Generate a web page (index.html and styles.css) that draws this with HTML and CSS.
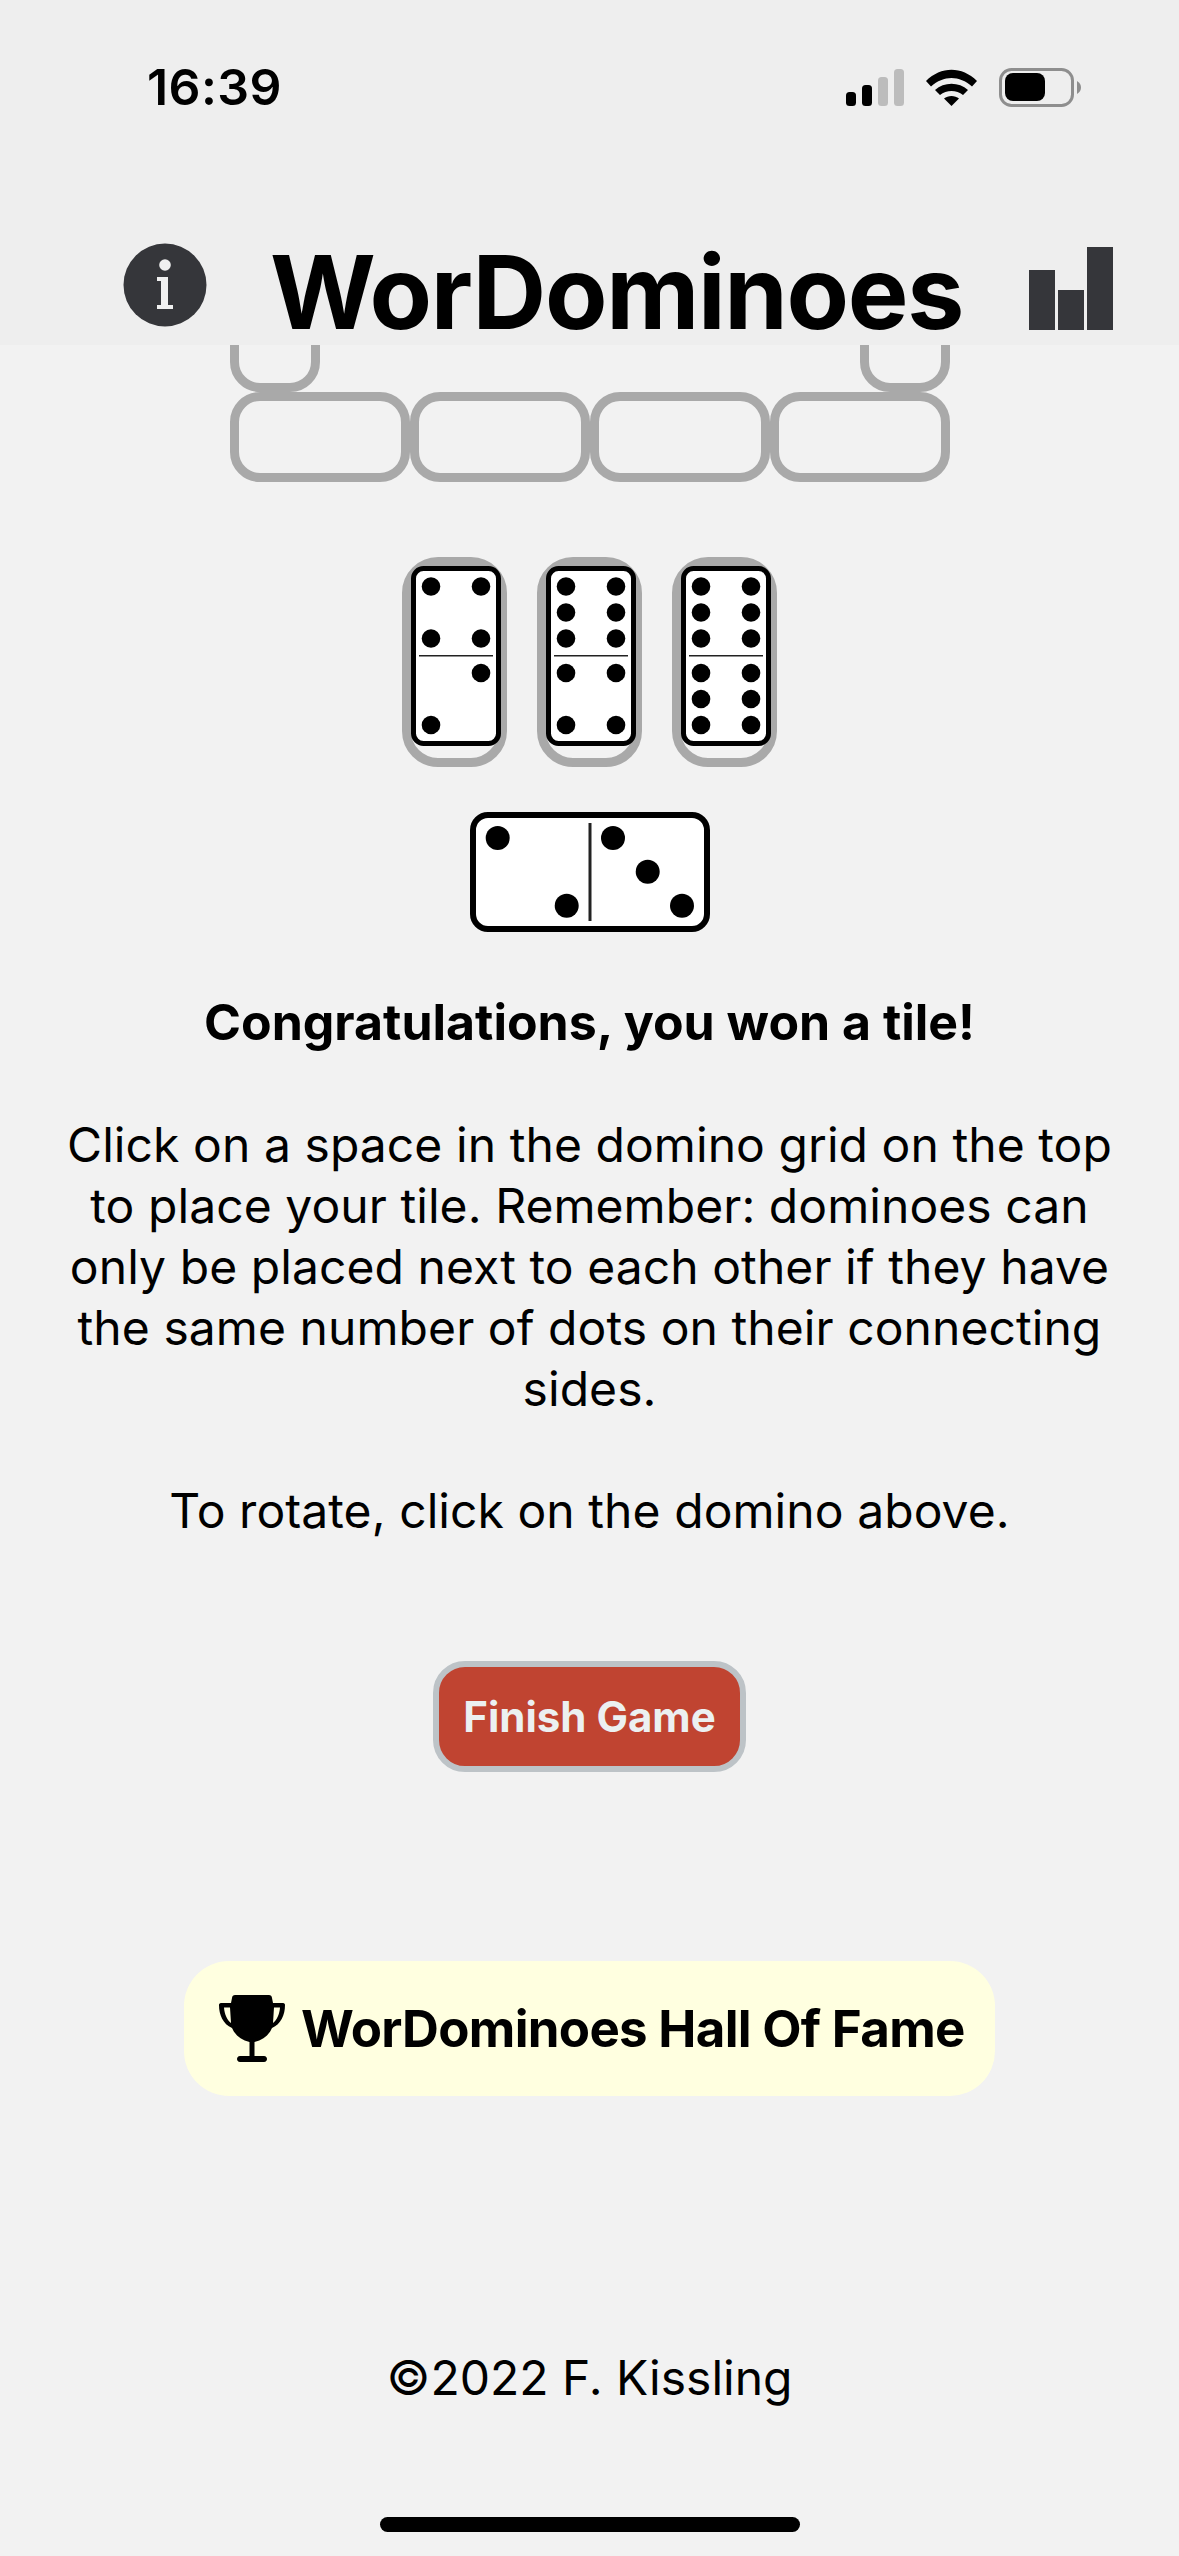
FILE: index.html
```html
<!DOCTYPE html>
<html lang="en">
<head>
<meta charset="utf-8">
<title>WorDominoes</title>
<link rel="stylesheet" href="styles.css">
</head>
<body>
<header class="topbar">
  <div class="status">
    <span class="clock">16:39</span>
    <div class="status-icons">
      <svg class="signal" width="58" height="38" viewBox="0 0 58 38">
        <rect x="0" y="23" width="10" height="14" rx="3.5" fill="#000"/>
        <rect x="16" y="16" width="10" height="21" rx="3.5" fill="#000"/>
        <rect x="32" y="8" width="10" height="29" rx="3.5" fill="#bcbcbc"/>
        <rect x="48" y="0" width="10" height="37" rx="3.5" fill="#bcbcbc"/>
      </svg>
      <svg class="wifi" width="51" height="38" viewBox="0 0 51 38">
        <path d="M0 12 C15 -3 36 -3 51 12 L46 17.500 C33.500 6 17.500 6 5 17.500Z" fill="#000"/>
        <path d="M9 21 C18 12.500 33 12.500 42 21 L37 26 C30.500 20.500 20.500 20.500 14 26Z" fill="#000"/>
        <path d="M18 29.500 C22 26 29 26 33 29.500 L25.500 37Z" fill="#000"/>
      </svg>
      <svg class="battery" width="82" height="39" viewBox="0 0 82 39">
        <rect x="1.500" y="1.500" width="72" height="36" rx="11" fill="none" stroke="#8e8e8e" stroke-width="3"/>
        <rect x="6" y="5" width="40" height="28" rx="8" fill="#000"/>
        <path d="M78 13 C81 15 82 17 82 19.500 C82 22 81 24 78 26Z" fill="#8e8e8e"/>
      </svg>
    </div>
  </div>
  <div class="titlebar">
    <svg class="info" width="84" height="84" viewBox="0 0 84 84">
      <circle cx="42" cy="42" r="41.500" fill="#35363a"/>
      <circle cx="42" cy="22" r="5.800" fill="#f0f0f0"/>
      <path d="M34 34 H45 V62 H50 V66 H34 V62 H38 V38 H34Z" fill="#f0f0f0"/>
    </svg>
    <h1 class="title">WorDominoes</h1>
    <div class="stats" aria-label="Statistics">
      <span class="stat-bar stat-mid"></span>
      <span class="stat-bar stat-low"></span>
      <span class="stat-bar stat-high"></span>
    </div>
  </div>
</header>

<main class="game">
  <section class="board">
    <div class="board-row">
      <div class="slot slot-v"></div>
      <div class="slot slot-v"></div>
    </div>
    <div class="board-row">
      <div class="slot slot-h"></div>
      <div class="slot slot-h"></div>
      <div class="slot slot-h"></div>
      <div class="slot slot-h"></div>
    </div>
  </section>

  <section class="tray">
    <div class="tray-cell">
      <svg class="domino-v" width="90" height="180" viewBox="0 0 90 180">
        <use href="#tile-v"/>
        <g class="pips"><circle cx="20" cy="20.500" r="9.300"/><circle cx="70" cy="20.500" r="9.300"/><circle cx="20" cy="72.500" r="9.300"/><circle cx="70" cy="72.500" r="9.300"/><circle cx="70" cy="107" r="9.300"/><circle cx="20" cy="159" r="9.300"/></g>
      </svg>
    </div>
    <div class="tray-cell">
      <svg class="domino-v" width="90" height="180" viewBox="0 0 90 180">
        <use href="#tile-v"/>
        <g class="pips"><circle cx="20" cy="20.500" r="9.300"/><circle cx="70" cy="20.500" r="9.300"/><circle cx="20" cy="46.500" r="9.300"/><circle cx="70" cy="46.500" r="9.300"/><circle cx="20" cy="72.500" r="9.300"/><circle cx="70" cy="72.500" r="9.300"/><circle cx="20" cy="107" r="9.300"/><circle cx="70" cy="107" r="9.300"/><circle cx="20" cy="159" r="9.300"/><circle cx="70" cy="159" r="9.300"/></g>
      </svg>
    </div>
    <div class="tray-cell">
      <svg class="domino-v" width="90" height="180" viewBox="0 0 90 180">
        <use href="#tile-v"/>
        <g class="pips"><circle cx="20" cy="20.500" r="9.300"/><circle cx="70" cy="20.500" r="9.300"/><circle cx="20" cy="46.500" r="9.300"/><circle cx="70" cy="46.500" r="9.300"/><circle cx="20" cy="72.500" r="9.300"/><circle cx="70" cy="72.500" r="9.300"/><circle cx="20" cy="107" r="9.300"/><circle cx="70" cy="107" r="9.300"/><circle cx="20" cy="133" r="9.300"/><circle cx="70" cy="133" r="9.300"/><circle cx="20" cy="159" r="9.300"/><circle cx="70" cy="159" r="9.300"/></g>
      </svg>
    </div>
  </section>

  <svg class="domino-h" width="240" height="120" viewBox="0 0 240 120">
    <rect x="3" y="3" width="234" height="114" rx="15" fill="#fff" stroke="#000" stroke-width="6"/>
    <rect x="118.500" y="11" width="3" height="98" fill="#222"/>
    <g class="pips"><circle cx="27.700" cy="26" r="12"/><circle cx="96.700" cy="93.700" r="12"/><circle cx="143" cy="26" r="12"/><circle cx="177.700" cy="59.700" r="12"/><circle cx="212" cy="93.700" r="12"/></g>
  </svg>

  <section class="message">
    <p class="won">Congratulations, you won a tile!</p>
    <p>Click on a space in the domino grid on the top to place your tile. Remember: dominoes can only be placed next to each other if they have the same number of dots on their connecting sides.</p>
    <p>To rotate, click on the domino above.</p>
  </section>

  <button class="finish" type="button">Finish Game</button>

  <a class="fame">
    <svg class="trophy" width="66" height="68" viewBox="0 0 66 68">
      <path d="M13 3 C13 1 14.500 0 16 0 H50 C51.500 0 53 1 53 3 L54 8 H64 C65.500 8 66 9 66 10 C66 20 62 29 53 33 C50 40 44 45 35.500 47 V61 H45 C47 61 48 62.500 48 64 C48 65.500 47 67 45 67 H21 C19 67 18 65.500 18 64 C18 62.500 19 61 21 61 H30.500 V47 C22 45 16 40 13 33 C4 29 0 20 0 10 C0 9 .5 8 2 8 H12Z M5 12.500 C5.500 19 8 25 12 28 L11 12.500Z M61 12.500 H55 L54 28 C58 25 60.500 19 61 12.500Z" fill="#000" fill-rule="evenodd"/>
    </svg>
    <span>WorDominoes Hall Of Fame</span>
  </a>

  <footer class="credit">©2022 F. Kissling</footer>
</main>

<div class="home-bar"></div>

<svg class="defs" width="0" height="0">
  <defs>
    <g id="tile-v">
      <rect x="2.500" y="2.500" width="85" height="175" rx="10" fill="#fff" stroke="#000" stroke-width="5"/>
      <rect x="8" y="89" width="74" height="1.500" fill="#222"/>
    </g>
  </defs>
</svg>
</body>
</html>
```
FILE: styles.css
```css
* {
  box-sizing: border-box;
}

html,
body {
  margin: 0;
  padding: 0;
}

body {
  position: relative;
  height: 2556px;
  overflow: hidden;
  background: #f2f2f2;
  color: #000;
  font-family: Inter, "Liberation Sans", sans-serif;
}

/* Status bar and title sit on one pale strip above the scrolled board */
.topbar {
  position: absolute;
  top: 0;
  left: 0;
  z-index: 2;
  width: 100%;
  height: 345px;
  padding-top: 68px;
  background: #eeeeee;
}

.status {
  display: flex;
  align-items: center;
  justify-content: space-between;
  height: 38px;
  padding: 0 98px 0 147px;
}

.clock {
  font-size: 50px;
  font-weight: 600;
  line-height: 38px;
  letter-spacing: 0.4px;
}

.status-icons {
  display: flex;
  align-items: flex-start;
  gap: 22px;
}

.signal,
.wifi {
  margin-top: 1px;
}

.titlebar {
  display: flex;
  align-items: flex-start;
  justify-content: space-between;
  margin-top: 137px;
  padding: 0 66px 0 123px;
}

.info {
  display: block;
}

.title {
  margin: -13px 0 0 -3px;
  font-size: 102px;
  font-weight: 700;
  line-height: 124px;
  letter-spacing: -1.3px;
}

.stats {
  display: flex;
  align-items: flex-end;
  gap: 3px;
  height: 83px;
  margin-top: 4px;
}

.stat-bar {
  display: block;
  width: 26px;
  background: #35363a;
}

.stat-mid {
  height: 60px;
}

.stat-low {
  height: 40px;
}

.stat-high {
  height: 83px;
}

.game {
  display: flex;
  flex-direction: column;
  align-items: center;
  padding-top: 212px;
}

.board {
  display: flex;
  flex-direction: column;
  width: 720px;
}

.board-row {
  display: flex;
  justify-content: space-between;
}

.slot {
  border: 9px solid #a9a9a9;
  border-radius: 30px;
}

.slot-v {
  width: 90px;
  height: 180px;
}

.slot-h {
  width: 180px;
  height: 90px;
}

.tray {
  display: flex;
  gap: 30px;
  margin-top: 75px;
}

.tray-cell {
  width: 105px;
  height: 210px;
  border: 9px solid #a9a9a9;
  border-radius: 36px;
}

.domino-v,
.domino-h {
  display: block;
}

.pips {
  fill: #000;
}

.domino-h {
  margin-top: 45px;
}

.message {
  width: 1060px;
  margin-top: 60px;
  font-size: 48px;
  font-weight: 380;
  line-height: 61px;
  letter-spacing: 0.07px;
  text-align: center;
}

.message p {
  margin: 0 0 61px;
}

.message .won {
  font-size: 50px;
  font-weight: 700;
  letter-spacing: 0;
}

.finish {
  width: 313px;
  height: 111px;
  margin-top: 59px;
  padding: 0;
  border: 6px solid #bdc3c7;
  border-radius: 32px;
  background: #c04431;
  color: #ecf0f1;
  font-family: inherit;
  font-size: 42px;
  font-weight: 700;
}

.fame {
  display: flex;
  align-items: center;
  gap: 16px;
  width: 811px;
  height: 135px;
  margin-top: 189px;
  padding-left: 35px;
  border-radius: 45px;
  background: #ffffe0;
  font-size: 51px;
  font-weight: 700;
  letter-spacing: -0.7px;
}

.trophy {
  display: block;
  flex: none;
}

.credit {
  margin-top: 251px;
  font-size: 48px;
  font-weight: 380;
  line-height: 61px;
}

.home-bar {
  position: absolute;
  left: 380px;
  top: 2517px;
  width: 420px;
  height: 15px;
  border-radius: 8px;
  background: #000;
}

.defs {
  position: absolute;
}
```
